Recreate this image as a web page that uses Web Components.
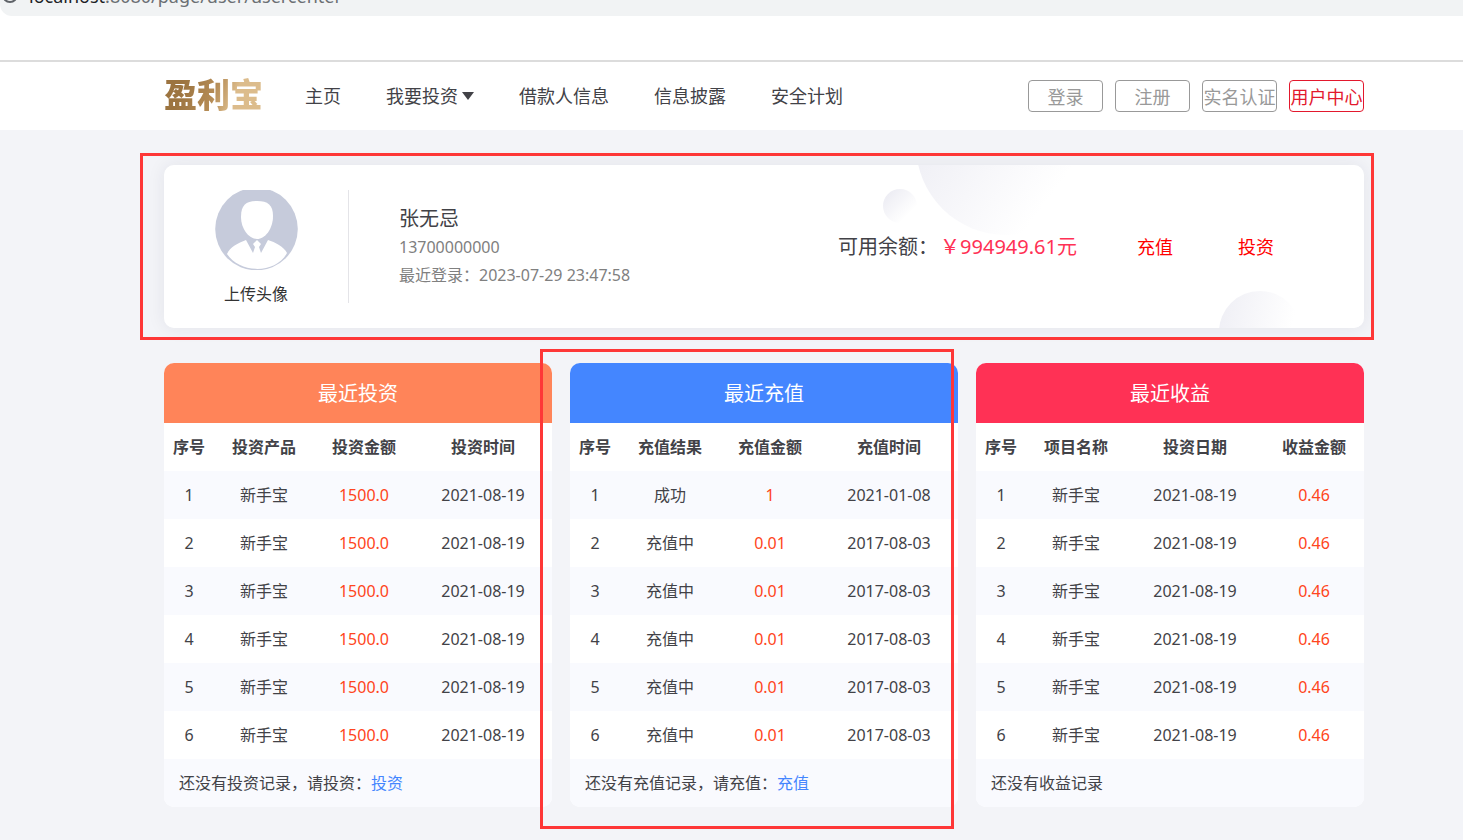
<!DOCTYPE html>
<html lang="zh-CN">
<head>
<meta charset="utf-8">
<title>盈利宝 - 用户中心</title>
<style>
  body {
    margin: 0;
    min-height: 100vh;
    background: #f3f4f8;
    color: #424247;
    font: 16px/24px "Noto Sans", "Noto Sans CJK SC", sans-serif;
    overflow-x: hidden;
    --gutter: 0 99px 0 164px;
  }
</style>
</head>
<body>
<user-center></user-center>

<template id="address-bar">
  <style>
    :host { display: block; background: #fff; height: 60px; border-bottom: 2px solid #dcdcdc; }
    .bar { display: flex; align-items: flex-end; gap: 11px; height: 16px; overflow: hidden; background: #f1f3f4; border-bottom-left-radius: 12px; color: #6b6f73; font-size: 18px; line-height: 20px; }
    svg { flex: none; margin-bottom: 12px; }
    span { margin-bottom: 10px; }
    b { font-weight: 400; color: #202124; }
  </style>
  <div class="bar">
    <svg width="18" height="18" viewBox="0 0 18 18" fill="none" stroke="#5f6368" stroke-width="2"><circle cx="10" cy="9" r="7"/><path d="M10 8v5M10 5v1"/></svg>
    <span><b>localhost</b>:8080/page/user/usercenter</span>
  </div>
</template>

<template id="site-header">
  <style>
    :host { display: flex; align-items: center; height: 68px; padding: var(--gutter); background: #fff; font-size: 18px; white-space: nowrap; }
    .logo { margin-bottom: 6px; font: 900 33px/40px "Noto Sans CJK SC", sans-serif; text-decoration: none; color: transparent; background: linear-gradient(110deg, #9c7440 20%, #b48b55 50%, #dcbc8c 70%); -webkit-background-clip: text; background-clip: text; }
    nav { display: flex; gap: 45px; margin-left: 42px; }
    nav a { color: #424247; text-decoration: none; display: flex; align-items: center; gap: 4px; }
    .actions { display: flex; gap: 12px; margin-left: auto; }
    button { width: 75px; height: 32px; padding: 2px 0 0; border: 1px solid #999; border-radius: 4px; background: #fff; color: #999; font: inherit; }
    button.on { color: #e3182d; border-color: #e3182d; }
  </style>
  <a class="logo" href="#">盈利宝</a>
  <nav>
    <a href="#">主页</a>
    <a href="#">我要投资<svg width="12" height="8" viewBox="0 0 12 8"><path d="M0 0h12L6 8z" fill="#424247"/></svg></a>
    <a href="#">借款人信息</a>
    <a href="#">信息披露</a>
    <a href="#">安全计划</a>
  </nav>
  <div class="actions">
    <button type="button">登录</button>
    <button type="button">注册</button>
    <button type="button">实名认证</button>
    <button type="button" class="on">用户中心</button>
  </div>
</template>

<template id="mark-box">
  <style>
    :host { position: absolute; z-index: 2; border: 3px solid #fe3737; pointer-events: none; }
  </style>
</template>

<template id="profile-card">
  <style>
    :host { display: block; position: relative; }
    .card { display: flex; align-items: center; position: relative; overflow: hidden; padding: 25px 0; border-radius: 10px; background: #fff; }
    .shade { border-radius: 10px; box-shadow: 0 0 18px rgba(40, 44, 60, .08); }
    .art { position: absolute; top: 0; right: 0; }
    .avatar { display: flex; flex-direction: column; align-items: center; gap: 13px; width: 184px; height: 113px; border-right: 1px solid #e4e4e8; line-height: 22px; }
    .avatar svg { display: block; flex: none; }
    .avatar a { color: #333; text-decoration: none; }
    .who { flex: 1; margin-left: 50px; color: #808080; line-height: 28px; white-space: nowrap; }
    .who p { margin: 0; }
    .who .name { font-size: 20px; color: #424247; }
    .money { display: flex; align-items: center; position: relative; margin-right: 90px; font-size: 20px; white-space: nowrap; }
    .money b { font-weight: 400; color: #ff3155; margin-left: 2px; }
    .money a { color: #f00; text-decoration: none; font-size: 18px; }
    .money b + a { margin: 0 65px 0 60px; }
    mark-box { inset: -12px -10px -12px -24px; }
  </style>
  <div class="shade"><div class="card">
    <svg class="art" width="500" height="163" viewBox="0 0 500 163">
      <defs>
        <linearGradient id="g1" x1="0.1" y1="0.4" x2="0.7" y2="0.85"><stop offset="0" stop-color="#efeff5"/><stop offset="1" stop-color="#fff"/></linearGradient>
        <linearGradient id="g2" x1="0.1" y1="0.1" x2="0.75" y2="0.75"><stop offset="0" stop-color="#ececf3"/><stop offset="1" stop-color="#fff"/></linearGradient>
        <linearGradient id="g3" x1="0" y1="0.2" x2="0.9" y2="0.4"><stop offset="0" stop-color="#efeff5"/><stop offset="1" stop-color="#fff"/></linearGradient>
      </defs>
      <circle cx="142" cy="-20" r="90" fill="url(#g1)"/>
      <circle cx="36" cy="41" r="17" fill="url(#g2)"/>
      <circle cx="396" cy="167" r="41" fill="url(#g3)"/>
    </svg>
    <div class="avatar">
      <svg width="83" height="80" viewBox="0 0 83 80">
        <circle cx="41.500" cy="39" r="41.300" fill="#c6cbdb"/>
        <path d="M26 27C26 15 31 11 42 11s16 4 16 15c0 13-8 23-16 23s-16-10-16-22z" fill="#fff"/>
        <path d="M12 64c3-7 11-11 19-14l7 13 2-6-2-3 4-4 4 4-2 3 2 6 7-13c7 2 16 7 19 13C61 84 25 84 12 64z" fill="#fff"/>
      </svg>
      <a href="#">上传头像</a>
    </div>
    <div class="who">
      <p class="name">张无忌</p>
      <p>13700000000</p>
      <p>最近登录：2023-07-29 23:47:58</p>
    </div>
    <div class="money"><span>可用余额：</span><b>￥994949.61元</b><a href="#">充值</a><a href="#">投资</a></div>
  </div></div>
  <mark-box></mark-box>
</template>

<template id="record-card">
  <style>
    :host { display: block; position: relative; min-width: 0; }
    .card { border-radius: 10px; overflow: hidden; background: #fff; }
    h2 { margin: 0; padding-top: 2px; font-size: 20px; font-weight: 400; line-height: 58px; text-align: center; color: #fff; background: var(--tone); }
    table { width: 100%; border-collapse: collapse; table-layout: fixed; text-align: center; }
    col.no { width: 50px; }
    col.std { width: 100px; }
    th, td { height: 48px; padding: 0; white-space: nowrap; }
    tbody tr:nth-child(odd) { background: #f9fafe; }
    .amount { color: #ff4520; }
    footer { padding: 12px 15px; background: #f9fafe; }
    ::slotted(a) { color: #4486ff; text-decoration: none; }
  </style>
  <div class="card">
    <h2></h2>
    <table><colgroup></colgroup><thead></thead><tbody></tbody></table>
    <footer><slot></slot></footer>
  </div>
  <slot name="mark"></slot>
</template>

<template id="user-center">
  <style>
    :host { display: block; }
    main { display: grid; gap: 35px; padding: var(--gutter); margin: 35px 0 32px; }
    .cards { display: grid; grid-template-columns: repeat(3, 1fr); gap: 18px; }
    .invest { --tone: #ff8459; }
    .charge { --tone: #4486ff; }
    .income { --tone: #ff3155; }
    .charge mark-box { inset: -14px 4px -22px -30px; }
    a { color: #4486ff; text-decoration: none; }
  </style>
  <address-bar></address-bar>
  <site-header></site-header>
  <main>
    <profile-card></profile-card>
    <div class="cards">
      <record-card class="invest" heading="最近投资" columns="序号,投资产品,投资金额,投资时间" amount="2" wide="3"
        rows="新手宝,1500.0,2021-08-19;新手宝,1500.0,2021-08-19;新手宝,1500.0,2021-08-19;新手宝,1500.0,2021-08-19;新手宝,1500.0,2021-08-19;新手宝,1500.0,2021-08-19">还没有投资记录，请投资：<a href="#">投资</a></record-card>
      <record-card class="charge" heading="最近充值" columns="序号,充值结果,充值金额,充值时间" amount="2" wide="3"
        rows="成功,1,2021-01-08;充值中,0.01,2017-08-03;充值中,0.01,2017-08-03;充值中,0.01,2017-08-03;充值中,0.01,2017-08-03;充值中,0.01,2017-08-03">还没有充值记录，请充值：<a href="#">充值</a><mark-box slot="mark"></mark-box></record-card>
      <record-card class="income" heading="最近收益" columns="序号,项目名称,投资日期,收益金额" amount="3" wide="2"
        rows="新手宝,2021-08-19,0.46;新手宝,2021-08-19,0.46;新手宝,2021-08-19,0.46;新手宝,2021-08-19,0.46;新手宝,2021-08-19,0.46;新手宝,2021-08-19,0.46">还没有收益记录</record-card>
    </div>
  </main>
</template>

<script>
  class TemplateElement extends HTMLElement {
    constructor() {
      super();
      const template = document.getElementById(this.localName);
      this.attachShadow({ mode: 'open' }).append(template.content.cloneNode(true));
    }
  }

  class RecordCard extends TemplateElement {
    connectedCallback() {
      const root = this.shadowRoot;
      const columns = this.getAttribute('columns').split(',');
      const amount = Number(this.getAttribute('amount'));
      const wide = Number(this.getAttribute('wide'));
      root.querySelector('h2').textContent = this.getAttribute('heading');
      root.querySelector('colgroup').innerHTML = columns
        .map((_, i) => `<col class="${i === 0 ? 'no' : i === wide ? '' : 'std'}">`).join('');
      root.querySelector('thead').innerHTML =
        `<tr>${columns.map(c => `<th scope="col">${c}</th>`).join('')}</tr>`;
      root.querySelector('tbody').innerHTML = this.getAttribute('rows').split(';')
        .map((row, n) => `<tr>${[n + 1, ...row.split(',')]
          .map((v, i) => `<td${i === amount ? ' class="amount"' : ''}>${v}</td>`).join('')}</tr>`)
        .join('');
    }
  }

  customElements.define('mark-box', class extends TemplateElement {});
  customElements.define('address-bar', class extends TemplateElement {});
  customElements.define('site-header', class extends TemplateElement {});
  customElements.define('profile-card', class extends TemplateElement {});
  customElements.define('record-card', RecordCard);
  customElements.define('user-center', class extends TemplateElement {});
</script>
</body>
</html>
